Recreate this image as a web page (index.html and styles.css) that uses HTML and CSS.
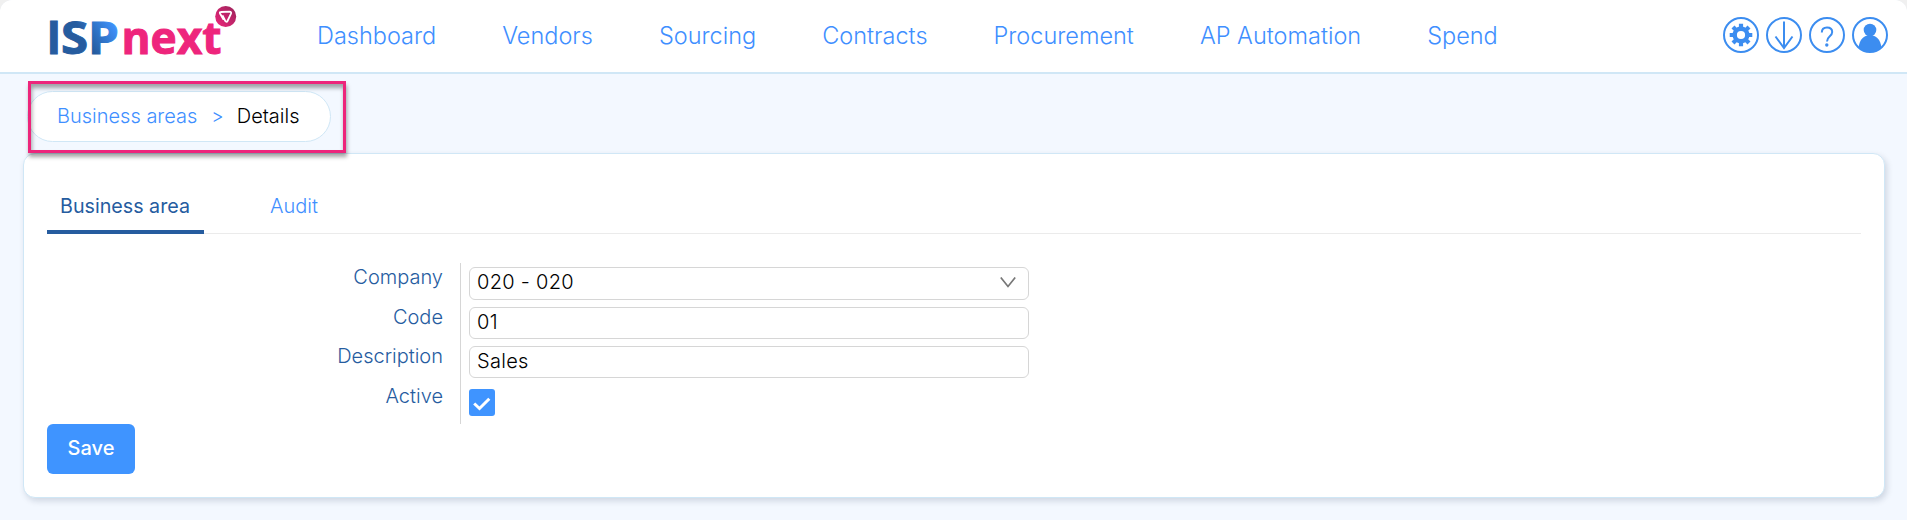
FILE: index.html
```html
<!DOCTYPE html>
<html lang="en">
<head>
    <meta charset="UTF-8">
    <meta name="viewport" content="width=device-width, initial-scale=1.0">
    <title>Business areas - Details</title>
    <link rel="stylesheet" href="styles.css">
</head>
<body>
    <header class="header">
        <a class="logo" href="#">
            <svg width="192" height="72" viewBox="0 0 192 72">
                <defs>
                    <linearGradient id="blue" gradientUnits="userSpaceOnUse" x1="28" y1="50" x2="68" y2="25">
                        <stop offset="0" stop-color="#265c9f"/>
                        <stop offset="0.3" stop-color="#265c9f"/>
                        <stop offset="1" stop-color="#3f94ff"/>
                    </linearGradient>
                    <linearGradient id="pink" x1="0" y1="1" x2="1" y2="0">
                        <stop offset="0" stop-color="#ef267c"/>
                        <stop offset="1" stop-color="#99235a"/>
                    </linearGradient>
                </defs>
                <text class="logo-i" x="-1" y="54" fill="#265c9f" stroke="#265c9f">I</text>
                <text class="logo-text" x="13" y="54" textLength="58" lengthAdjust="spacingAndGlyphs" fill="url(#blue)" stroke="url(#blue)">SP</text>
                <text class="logo-text" x="73.500" y="54" textLength="100" lengthAdjust="spacingAndGlyphs" fill="#ee257c" stroke="#ee257c">next</text>
                <circle cx="177.700" cy="16.500" r="10.500" fill="url(#pink)"/>
                <path d="M175.500 19.500L172 13.500c-.5-1 0-1.500 1-1.500l8.500-.3c1.500 0 2 .8 1.500 2l-3.500 7.300c-.5 1-1.500 1-2.200 0l-2.800-5.500" fill="none" stroke="#fff" stroke-width="1.800" stroke-linejoin="round"/>
            </svg>
        </a>
        <nav class="navbar">
            <a href="#">Dashboard</a>
            <a href="#">Vendors</a>
            <a href="#">Sourcing</a>
            <a href="#">Contracts</a>
            <a href="#">Procurement</a>
            <a href="#">AP Automation</a>
            <a href="#">Spend</a>
        </nav>
        <div class="tools">
            <svg width="36" height="36" viewBox="0 0 36 36">
                <circle class="ring" cx="18" cy="18" r="17"/>
                <circle cx="18" cy="18" r="6.300" fill="none" stroke="#3c8df0" stroke-width="4.400"/>
                <g stroke="#3c8df0" stroke-width="4.200">
                    <path d="M18 6.700v4.300M18 25v4.300M6.700 18H11M25 18h4.300M10 10l3 3M23 23l3 3M10 26l3-3M23 13l3-3"/>
                </g>
            </svg>
            <svg width="36" height="36" viewBox="0 0 36 36">
                <circle class="ring" cx="18" cy="18" r="17"/>
                <path class="line" d="M18 4.500V31M9.500 19.500L18 31l8.500-11.500"/>
            </svg>
            <svg width="36" height="36" viewBox="0 0 36 36">
                <circle class="ring" cx="18" cy="18" r="17"/>
                <path class="line" d="M12.800 15.500c0-3.500 2.200-5 5.200-5s5.200 1.700 5.200 4.500c0 4.500-5.200 4-5.200 9.500"/>
                <circle cx="17.800" cy="28" r="1.700" fill="#3c8df0"/>
            </svg>
            <svg width="36" height="36" viewBox="0 0 36 36">
                <circle class="ring" cx="18" cy="18" r="17"/>
                <circle cx="18" cy="13" r="6.300" fill="#3c8df0"/>
                <path d="M6.500 30.500C7.500 23.500 11 19.500 14.500 18.800h7c3.500.7 7 4.700 8 11.700C26 34 22 35 18 35s-8-1-11.500-4.500z" fill="#3c8df0"/>
            </svg>
        </div>
    </header>

    <main class="page">
        <div class="breadcrumb">
            <a href="#">Business areas</a>
            <span class="separator">&gt;</span>
            <span class="current">Details</span>
            <div class="highlight"></div>
        </div>

        <section class="card">
            <div class="tabs">
                <a class="tab active" href="#">Business area</a>
                <a class="tab" href="#">Audit</a>
            </div>

            <form>
                <div class="form">
                    <div class="labels">
                        <label for="company">Company</label>
                        <label for="code">Code</label>
                        <label for="description">Description</label>
                        <label for="active">Active</label>
                    </div>
                    <div class="fields">
                        <div class="field select" id="company">
                            <span>020 - 020</span>
                            <svg width="16" height="11" viewBox="0 0 16 11">
                                <path d="M.8.500L8 9.500 15.200.500" fill="none" stroke="#777" stroke-width="1.700"/>
                            </svg>
                        </div>
                        <input class="field" type="text" id="code" value="01">
                        <input class="field" type="text" id="description" value="Sales">
                        <div class="checkbox" id="active">
                            <svg width="26" height="27" viewBox="0 0 26 27">
                                <path d="M5.200 14.500l5.300 5L20.300 9.700" fill="none" stroke="#fff" stroke-width="3"/>
                            </svg>
                        </div>
                    </div>
                </div>
                <button class="save" type="button">Save</button>
            </form>
        </section>
    </main>
</body>
</html>
```
FILE: styles.css
```css
* {
    box-sizing: border-box;
}

html {
    background-color: #f0f0f0;
}

body {
    margin: 0;
    height: 520px;
    overflow: hidden;
    font-family: Inter, "Liberation Sans", sans-serif;
    font-size: 20px;
    font-weight: 300;
    color: #000;
    background-color: #f3f8ff;
    border-radius: 12px 12px 0 0;
}

a {
    color: #3f8fff;
    text-decoration: none;
}

.header {
    display: flex;
    height: 74px;
    padding: 0 19px 0 48px;
    background-color: #fff;
    border-bottom: 2px solid #d0e7f6;
    border-radius: 12px 12px 0 0;
}

.logo {
    width: 192px;
    height: 72px;
}

.logo svg {
    display: block;
    overflow: visible;
}

.logo-i {
    font: 900 45px Lato, sans-serif;
    stroke-width: 1px;
}

.logo-text {
    font: 700 44.500px "Open Sans", sans-serif;
    stroke-width: 1px;
}

.navbar {
    display: flex;
    gap: 66px;
    margin-left: 77px;
    padding-top: 17px;
    font-size: 23.500px;
    line-height: 38px;
    white-space: nowrap;
}

.tools {
    display: flex;
    gap: 7px;
    margin-left: auto;
    padding-top: 17px;
}

.ring {
    fill: none;
    stroke: #3c8df0;
    stroke-width: 2;
}

.line {
    fill: none;
    stroke: #3c8df0;
    stroke-width: 2;
}

.page {
    padding: 17px 22px 0 23px;
}

.breadcrumb {
    position: relative;
    display: flex;
    align-items: center;
    width: 304px;
    height: 51px;
    margin-left: 4px;
    padding: 0 0 1px 29px;
    background-color: #fff;
    border: 1px solid #d0e7f6;
    border-radius: 26px;
    white-space: nowrap;
}

.separator {
    margin: 0 13px 0 14px;
    font-size: 19px;
    color: #3f8fff;
}

/* marker frame around the breadcrumb */
.highlight {
    position: absolute;
    z-index: 1;
    left: 0;
    top: -11px;
    width: 318px;
    height: 72px;
    border: 3px solid #ed257b;
    box-shadow: 1px 4px 4px rgba(0, 0, 0, 0.35), inset 1px 4px 4px rgba(0, 0, 0, 0.35);
}

.card {
    height: 345px;
    margin-top: 11px;
    padding: 35px 23px 0;
    background-color: #fff;
    border: 1px solid #d0e7f6;
    border-radius: 12px;
    box-shadow: 2px 3px 6px rgba(0, 30, 60, 0.15);
}

.tabs {
    display: flex;
    height: 45px;
    border-bottom: 1px solid #ebebeb;
}

.tab {
    height: 45px;
    padding: 0 14px;
    line-height: 34px;
    white-space: nowrap;
}

.tab.active {
    width: 157px;
    margin-right: 52px;
    padding: 0 13px;
    color: #265c9f;
    font-size: 19.700px;
    font-weight: 400;
    border-bottom: 4px solid #265c9f;
}

.form {
    display: flex;
    height: 161px;
    margin-top: 29px;
}

.labels {
    display: flex;
    flex-direction: column;
    width: 414px;
    padding-right: 17px;
    color: #265c9f;
    text-align: right;
    border-right: 1px solid #d6d6d6;
}

.labels label {
    height: 39.700px;
    line-height: 29px;
}

.fields {
    display: flex;
    flex-direction: column;
    gap: 7px;
    width: 568px;
    padding: 4px 0 0 8px;
}

.field {
    width: 560px;
    height: 32px;
    padding: 0 7px 3px;
    font: inherit;
    letter-spacing: 0.3px;
    background-color: #fff;
    border: 1px solid #d6d6d6;
    border-radius: 6px;
}

.select {
    display: flex;
    align-items: center;
    justify-content: space-between;
    height: 33px;
    padding-right: 12px;
}

.checkbox {
    width: 26px;
    height: 27px;
    margin-top: 4px;
    background-color: #3f94ff;
    border-radius: 3px;
}

.checkbox svg {
    display: block;
}

.save {
    display: block;
    width: 88px;
    height: 50px;
    padding: 0 0 2px;
    font: 500 20px Inter, sans-serif;
    color: #fff;
    background-color: #3f94ff;
    border: none;
    border-radius: 6px;
}
```
